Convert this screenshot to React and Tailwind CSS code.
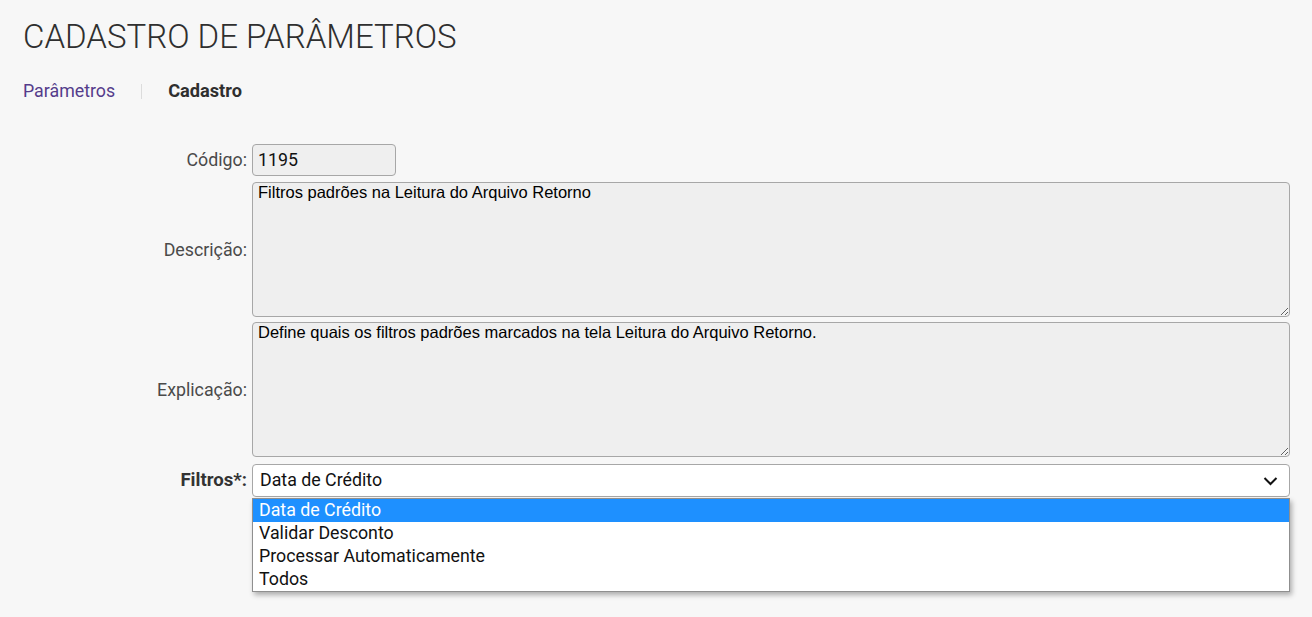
import React from "react";

const labelCls = "w-[229px] shrink-0 text-right pr-[5px] text-[17.8px] leading-[24px] text-[#4a4a4a]";
const taCls =
  "flex-1 h-[135px] bg-[#efefef] border border-[#a7a7a7] rounded-[4px] pl-[5px] pt-0 text-[16.5px] leading-[19px] text-black font-['Liberation_Sans',Arial,sans-serif] outline-none";

export default function App() {
  return (
    <div className="min-h-screen bg-[#f7f7f7] px-[23px] pr-[22px] font-['Roboto',sans-serif]">
      <h1 className="pt-[18px] text-[33px] leading-[38px] font-light text-[#2f2f2f]">
        CADASTRO DE PARÂMETROS
      </h1>
      <div className="mt-[23px] flex items-center text-[17.8px] leading-[24px]">
        <span className="text-[#553c8b]">Parâmetros</span>
        <span className="ml-[26px] mr-[26px] h-[15px] w-px bg-[#dcdcdc]" />
        <span className="font-bold text-[#2f2f2f] text-[18.2px]">Cadastro</span>
      </div>

      <div className="mt-[41px]">
        <div className="flex items-center h-[32px]">
          <label className={labelCls}>Código:</label>
          <div className="w-[144px] h-[32px] bg-[#efefef] border border-[#a7a7a7] rounded-[4px] px-[5px] flex items-center text-[17.8px] text-[#111]">
            1195
          </div>
        </div>

        <div className="flex items-center mt-[6px]">
          <label className={labelCls}>Descrição:</label>
          <textarea readOnly defaultValue="Filtros padrões na Leitura do Arquivo Retorno" className={taCls} />
        </div>

        <div className="flex items-center mt-[5px]">
          <label className={labelCls}>Explicação:</label>
          <textarea
            readOnly
            defaultValue="Define quais os filtros padrões marcados na tela Leitura do Arquivo Retorno."
            className={taCls}
          />
        </div>

        <div className="flex items-start mt-[7px]">
          <label className={labelCls + " font-bold text-[#333] text-[18.6px] leading-[33px]"}>Filtros*:</label>
          <div className="relative flex-1">
            <div className="h-[33px] bg-white border border-[#a7a7a7] rounded-[4px] pl-[7px] pr-[11px] flex items-center justify-between text-[17.8px] text-[#111]">
              <span>Data de Crédito</span>
              <svg width="15" height="10" viewBox="0 0 15 10" fill="none">
                <path d="M1.5 2 L7.5 8 L13.5 2" stroke="#111" strokeWidth="2" />
              </svg>
            </div>
            <div className="absolute left-0 right-0 top-[34px] bg-white border border-[#8f8f8f] shadow-[2px_3px_5px_rgba(0,0,0,0.3)] text-[17.8px] leading-[22px] text-[#111]">
              <div className="h-[23px] px-[6px] bg-[#1e90ff] text-white">Data de Crédito</div>
              <div className="h-[23px] px-[6px]">Validar Desconto</div>
              <div className="h-[23px] px-[6px]">Processar Automaticamente</div>
              <div className="h-[23px] px-[6px]">Todos</div>
            </div>
          </div>
        </div>
      </div>
    </div>
  );
}
